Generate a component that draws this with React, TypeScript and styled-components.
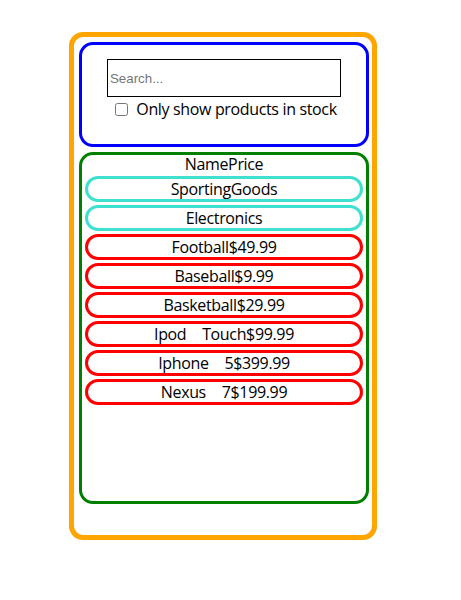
import React from "react";
import styled, { createGlobalStyle } from "styled-components";

const Global = createGlobalStyle`
  html, body { margin: 0; padding: 0; background: #fff; }
  body { font-family: "Open Sans", "Noto Sans", sans-serif; font-size: 16px; color: #000; }
`;

const Outer = styled.div`
  box-sizing: border-box;
  margin: 32px 0 0 69px;
  width: 308px;
  height: 508px;
  border: 5px solid #ffa500;
  border-radius: 14px;
  padding: 5px 4px 5px 5px;
  display: flex;
  flex-direction: column;
  gap: 5px;
`;

const SearchPanel = styled.form`
  box-sizing: border-box;
  margin: 0;
  width: 290px;
  height: 105px;
  border: 3px solid #0000ff;
  border-radius: 14px;
  padding-top: 14px;
  display: flex;
  flex-direction: column;
  align-items: center;
`;

const SearchInput = styled.input`
  box-sizing: border-box;
  width: 234px;
  height: 38px;
  border: 1px solid #000;
  padding: 0 2px;
  margin: 0;
  font-family: "Liberation Sans", Arial, sans-serif;
  font-size: 13.3px;
  outline: none;
  &::placeholder { color: #757575; }
`;

const CheckLabel = styled.label`
  display: flex;
  align-items: center;
  margin-top: 1px;
  font-size: 16px;
  line-height: 22px;
  letter-spacing: -0.35px;
  input { margin: 0 8px 0 4px; width: 13px; height: 13px; }
`;

const TablePanel = styled.div`
  box-sizing: border-box;
  width: 290px;
  height: 352px;
  border: 3px solid #008000;
  border-radius: 14px;
  display: flex;
  flex-direction: column;
  align-items: center;
  gap: 3px;
`;

const HeaderRow = styled.div`
  height: 18px;
  line-height: 19px;
  text-align: center;
  font-size: 16px;
  letter-spacing: -0.35px;
`;

const Pill = styled.div<{ $kind: "category" | "product" }>`
  box-sizing: border-box;
  width: calc(100% - 6px);
  height: 26px;
  border: 3px solid ${(p) => (p.$kind === "category" ? "#40e0d0" : "#ff0000")};
  border-radius: 13px;
  display: flex;
  justify-content: center;
  align-items: center;
  font-size: 16px;
  letter-spacing: -0.35px;
  white-space: pre;
`;

const Gap = styled.span`
  display: inline-block;
  width: 12px;
`;

type Row = { kind: "category" | "product"; name: string; price?: string };

const rows: Row[] = [
  { kind: "category", name: "SportingGoods" },
  { kind: "category", name: "Electronics" },
  { kind: "product", name: "Football", price: "$49.99" },
  { kind: "product", name: "Baseball", price: "$9.99" },
  { kind: "product", name: "Basketball", price: "$29.99" },
  { kind: "product", name: "Ipod Touch", price: "$99.99" },
  { kind: "product", name: "Iphone 5", price: "$399.99" },
  { kind: "product", name: "Nexus 7", price: "$199.99" },
];

function renderName(name: string) {
  const parts = name.split(" ");
  return parts.map((part, i) => (
    <React.Fragment key={i}>
      {i > 0 && (
        <>
          {" "}
          <Gap />
        </>
      )}
      {part}
    </React.Fragment>
  ));
}

export default function App() {
  return (
    <>
      <Global />
      <Outer>
        <SearchPanel>
          <SearchInput type="text" placeholder="Search..." />
          <CheckLabel>
            <input type="checkbox" />
            Only show products in stock
          </CheckLabel>
        </SearchPanel>
        <TablePanel>
          <HeaderRow>NamePrice</HeaderRow>
          {rows.map((r) => (
            <Pill key={r.name} $kind={r.kind}>
              {renderName(r.name)}
              {r.price ?? ""}
            </Pill>
          ))}
        </TablePanel>
      </Outer>
    </>
  );
}
